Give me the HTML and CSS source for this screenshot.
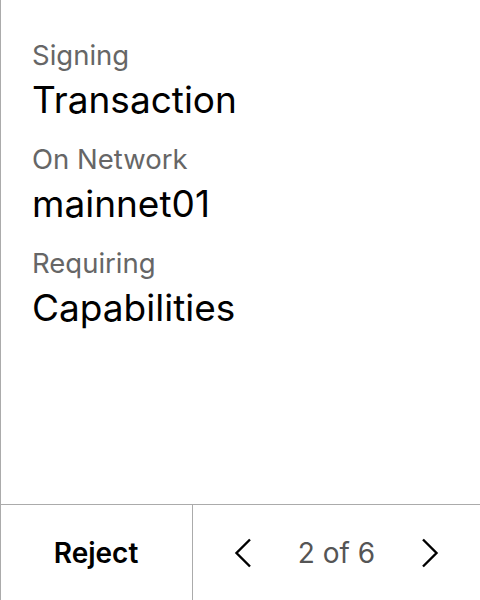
FILE: index.html
```html
<!DOCTYPE html>
<html>
<head>
<meta charset="utf-8">
<link rel="stylesheet" href="styles.css">
</head>
<body>
<div class="screen">
  <div class="content">
    <div class="field">
      <div class="label">Signing</div>
      <div class="value">Transaction</div>
    </div>
    <div class="field">
      <div class="label">On Network</div>
      <div class="value">mainnet01</div>
    </div>
    <div class="field">
      <div class="label">Requiring</div>
      <div class="value">Capabilities</div>
    </div>
  </div>
  <div class="footer">
    <div class="reject">Reject</div>
    <div class="pager">
      <svg class="chev" width="18" height="30" viewBox="0 0 18 30"><path d="M16 1.5 L2.5 15 L16 28.5" fill="none" stroke="#000" stroke-width="2.4"/></svg>
      <span class="count">2 of 6</span>
      <svg class="chev" width="18" height="30" viewBox="0 0 18 30"><path d="M2 1.5 L15.5 15 L2 28.5" fill="none" stroke="#000" stroke-width="2.4"/></svg>
    </div>
  </div>
</div>
</body>
</html>
```
FILE: styles.css
```css
html, body {
  margin: 0;
  padding: 0;
  background: #fff;
}
body {
  font-family: Inter, "Noto Sans", sans-serif;
}
.screen {
  width: 480px;
  height: 600px;
  box-sizing: border-box;
  border-left: 1px solid #ababab;
  display: flex;
  flex-direction: column;
}
.content {
  flex: 1;
  padding: 38px 0 0 31px;
  display: flex;
  flex-direction: column;
  gap: 20px;
}
.label {
  font-size: 27.5px;
  line-height: 34px;
  color: #666;
}
.value {
  font-size: 37px;
  line-height: 44px;
  color: #000;
  margin-top: 6px;
}
.footer {
  height: 95px;
  border-top: 1px solid #ababab;
  display: flex;
}
.reject {
  width: 190px;
  border-right: 1px solid #ababab;
  display: flex;
  align-items: center;
  justify-content: center;
  font-size: 28px;
  font-weight: 600;
  color: #000;
  padding-right: 1px;
}
.pager {
  flex: 1;
  display: flex;
  align-items: center;
  justify-content: center;
  gap: 46px;
}
.count {
  font-size: 28px;
  color: #555;
}
```
